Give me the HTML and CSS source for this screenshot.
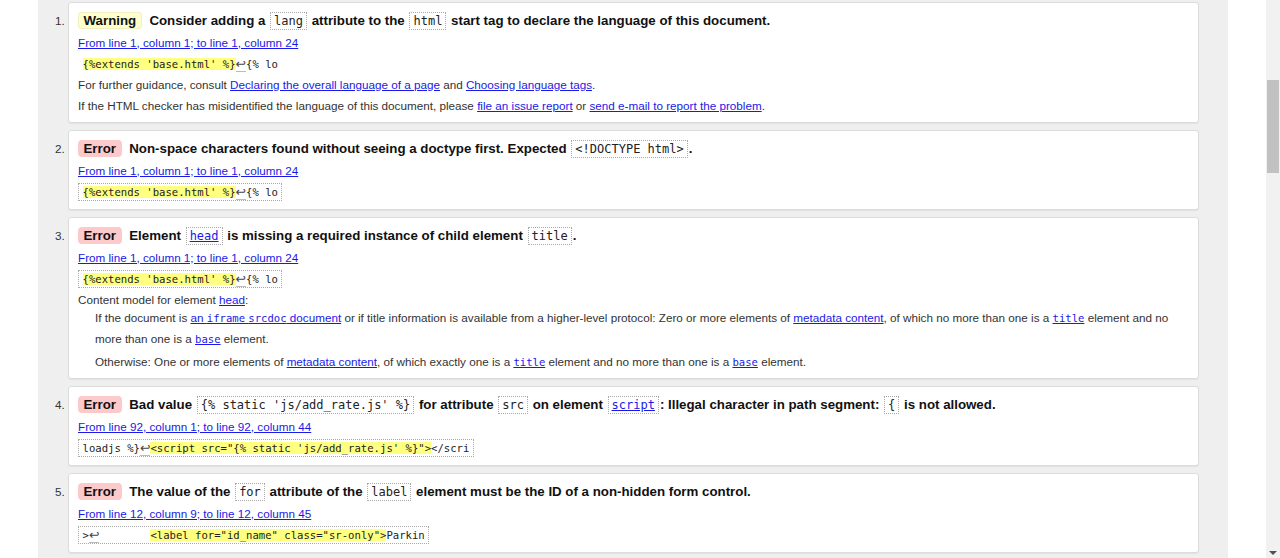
FILE: index.html
```html
<!DOCTYPE html>
<html lang="en">
<head>
<meta charset="utf-8">
<title>Nu Html Checker results</title>
<link rel="stylesheet" href="styles.css">
</head>
<body>
<div class="page">
  <main class="results">
    <ol class="messages">
      <li class="msg">
        <p class="head"><strong class="badge warn">Warning</strong> <span>Consider adding a <code class="tok">lang</code> attribute to the <code class="tok">html</code> start tag to declare the language of this document.</span></p>
        <p class="loc"><a href="#">From line 1, column 1; to line 1, column 24</a></p>
        <p class="extract"><code class="ext plain"><mark>{%extends 'base.html' %}</mark><span class="lf">↩</span>{% lo</code></p>
        <p class="info">For further guidance, consult <a href="#">Declaring the overall language of a page</a> and <a href="#">Choosing language tags</a>.</p>
        <p class="info">If the HTML checker has misidentified the language of this document, please <a href="#">file an issue report</a> or <a href="#">send e-mail to report the problem</a>.</p>
      </li>
      <li class="msg">
        <p class="head"><strong class="badge err">Error</strong> <span>Non-space characters found without seeing a doctype first. Expected <code class="tok">&lt;!DOCTYPE html&gt;</code>.</span></p>
        <p class="loc"><a href="#">From line 1, column 1; to line 1, column 24</a></p>
        <p class="extract boxed"><code class="ext"><mark>{%extends 'base.html' %}</mark><span class="lf">↩</span>{% lo</code></p>
      </li>
      <li class="msg">
        <p class="head"><strong class="badge err">Error</strong> <span>Element <code class="tok"><a href="#">head</a></code> is missing a required instance of child element <code class="tok">title</code>.</span></p>
        <p class="loc"><a href="#">From line 1, column 1; to line 1, column 24</a></p>
        <p class="extract boxed"><code class="ext"><mark>{%extends 'base.html' %}</mark><span class="lf">↩</span>{% lo</code></p>
        <dl class="model">
          <dt>Content model for element <a href="#">head</a>:</dt>
          <dd>If the document is <a href="#">an <code>iframe</code> <code>srcdoc</code> document</a> or if title information is available from a higher-level protocol: Zero or more elements of <a href="#">metadata content</a>, of which no more than one is a <a href="#"><code>title</code></a> element and no more than one is a <a href="#"><code>base</code></a> element.</dd>
          <dd>Otherwise: One or more elements of <a href="#">metadata content</a>, of which exactly one is a <a href="#"><code>title</code></a> element and no more than one is a <a href="#"><code>base</code></a> element.</dd>
        </dl>
      </li>
      <li class="msg">
        <p class="head"><strong class="badge err">Error</strong> <span>Bad value <code class="tok">{% static 'js/add_rate.js' %}</code> for attribute <code class="tok">src</code> on element <code class="tok"><a href="#">script</a></code>: Illegal character in path segment: <code class="tok">{</code> is not allowed.</span></p>
        <p class="loc"><a href="#">From line 92, column 1; to line 92, column 44</a></p>
        <p class="extract boxed"><code class="ext">loadjs %}<span class="lf">↩</span><mark>&lt;script src="{% static 'js/add_rate.js' %}"&gt;</mark>&lt;/scri</code></p>
      </li>
      <li class="msg">
        <p class="head"><strong class="badge err">Error</strong> <span>The value of the <code class="tok">for</code> attribute of the <code class="tok">label</code> element must be the ID of a non-hidden form control.</span></p>
        <p class="loc"><a href="#">From line 12, column 9; to line 12, column 45</a></p>
        <p class="extract boxed"><code class="ext">&gt;<span class="lf">↩</span>        <mark>&lt;label for="id_name" class="sr-only"&gt;</mark>Parkin</code></p>
      </li>
    </ol>
  </main>
  <div class="scrollbar" aria-hidden="true">
    <div class="thumb"></div>
    <div class="arrow"></div>
  </div>
</div>
</body>
</html>
```
FILE: styles.css
```css
html, body {
  margin: 0;
  padding: 0;
  background: #fff;
}

body {
  font-family: "Liberation Sans", Arial, sans-serif;
  font-size: 11.7px;
  color: #222;
}

.page {
  display: flex;
  height: 558px;
  overflow: hidden;
}

.results {
  flex: 0 0 1190px;
  margin: 0 38px;
  background: #efefef;
  height: 558px;
}

.messages {
  margin: 0;
  padding: 2px 29px 0 30px;
  color: #333;
}

.msg {
  margin: 0 0 7px 0;
  padding: 5.5px 9px 6.5px 9px;
  background: #fff;
  border: 1px solid #dcdcdc;
  border-radius: 3px;
  box-shadow: 0 1px 1px rgba(0, 0, 0, 0.06);
}

.msg p {
  margin: 0;
}

.head {
  line-height: 23px;
  font-size: 13.3px;
  font-weight: bold;
  color: #111;
}

.badge {
  display: inline-block;
  line-height: 17px;
  padding: 0 5.5px;
  margin-right: 4px;
  border-radius: 4px;
  color: #111;
}

.badge.warn {
  background: #ffffcc;
  box-shadow: inset 0 0 0 1px #f2f0c0;
}

.badge.err {
  background: #fccaca;
}

code {
  font-family: "DejaVu Sans Mono", "Liberation Mono", monospace;
  font-weight: normal;
  line-height: 1;
}

.tok {
  font-size: 12px;
  padding: 1px 3px;
  margin: 0 1px;
  border: 1px dotted #aaa;
  background: #fff;
  color: #222;
}

.tok a {
  color: #1a1ae6;
}

a {
  color: #1a1ae6;
  text-decoration: underline;
}

.loc, .info {
  line-height: 21px;
}

.extract {
  line-height: 21px;
}

.extract.boxed {
  line-height: 22px;
}

.ext {
  font-size: 10.6px;
  white-space: pre;
  padding: 2px 3.5px 2px 3.5px;
  border: 1px dotted #aaa;
  color: #222;
}

.ext.plain {
  border-color: transparent;
}

mark {
  background: #ffff80;
  color: #222;
}

.lf {
  font-family: "DejaVu Sans", sans-serif;
  font-size: 12.5px;
  border-bottom: 1px solid #bbb;
  color: #444;
}

.model {
  margin: 0;
}

.model dt {
  line-height: 19px;
  margin-bottom: -2px;
}

.model dd {
  margin: 0 0 2px 17px;
  line-height: 21px;
}

.model dd:last-child {
  margin-bottom: 0;
}

.model code {
  font-size: 10.6px;
}

.scrollbar {
  flex: 0 0 14px;
  position: relative;
  background: #f1f1f1;
  height: 558px;
}

.thumb {
  position: absolute;
  left: 1px;
  right: 1px;
  top: 80px;
  height: 93px;
  background: #c1c1c1;
}

.arrow {
  position: absolute;
  left: 3px;
  bottom: 3px;
  width: 0;
  height: 0;
  border-left: 4px solid transparent;
  border-right: 4px solid transparent;
  border-top: 4px solid #505050;
}
```
